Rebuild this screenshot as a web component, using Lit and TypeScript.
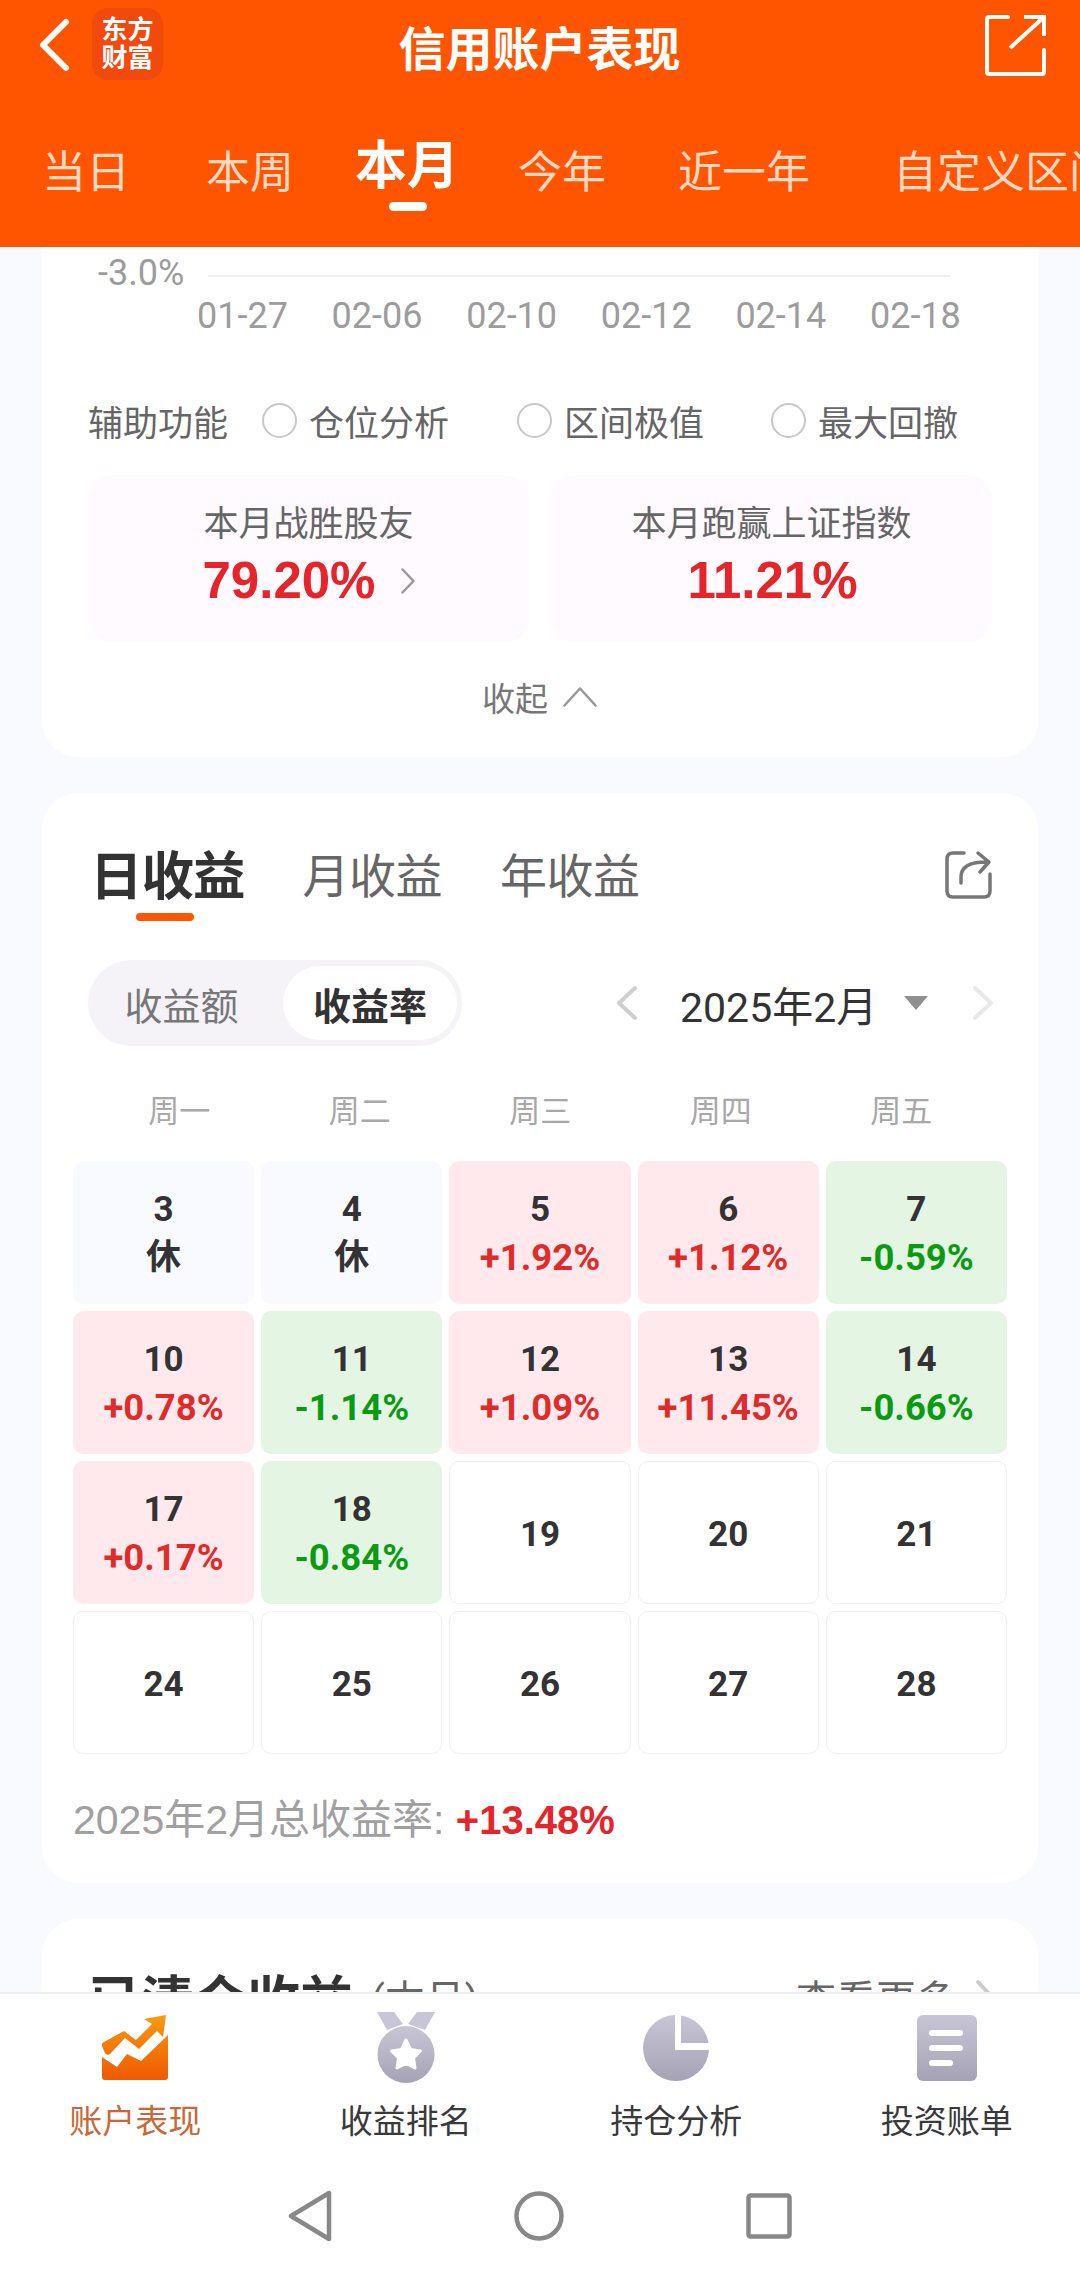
import { LitElement, html, css, svg, unsafeCSS } from "lit";
import { customElement } from "lit/decorators.js";

const FONT = unsafeCSS(`"Roboto", "Noto Sans CJK SC", sans-serif`);
const ARIAL = unsafeCSS(`"Liberation Sans", "Noto Sans CJK SC", sans-serif`);

type Day = { d: number; t?: string; k: "rest" | "up" | "down" | "none" };
const days: Day[] = [
  { d: 3, t: "休", k: "rest" }, { d: 4, t: "休", k: "rest" }, { d: 5, t: "+1.92%", k: "up" }, { d: 6, t: "+1.12%", k: "up" }, { d: 7, t: "-0.59%", k: "down" },
  { d: 10, t: "+0.78%", k: "up" }, { d: 11, t: "-1.14%", k: "down" }, { d: 12, t: "+1.09%", k: "up" }, { d: 13, t: "+11.45%", k: "up" }, { d: 14, t: "-0.66%", k: "down" },
  { d: 17, t: "+0.17%", k: "up" }, { d: 18, t: "-0.84%", k: "down" }, { d: 19, k: "none" }, { d: 20, k: "none" }, { d: 21, k: "none" },
  { d: 24, k: "none" }, { d: 25, k: "none" }, { d: 26, k: "none" }, { d: 27, k: "none" }, { d: 28, k: "none" },
];

@customElement("app-root")
export class AppRoot extends LitElement {
  static styles = css`
    :host { display: block; width: 1080px; height: 2274px; overflow: hidden; background: #f8faff; font-family: ${FONT}; position: relative; }
    * { box-sizing: border-box; }
    .page { display: flex; flex-direction: column; height: 2274px; }
    .top { height: 247px; flex: none; background: #ff5500; color: #fff; position: relative; z-index: 2; }
    .bar { height: 90px; display: flex; align-items: center; padding: 0 34px 0 38px; }
    .bar .back { flex: none; display: block; }
    .logo { flex: none; width: 71px; height: 72px; margin-left: 22px; margin-top: -2px; border-radius: 16px; background: #f24a0c; color: #fff; font-size: 26px; line-height: 28px; font-weight: 700; text-align: center; display: flex; align-items: center; justify-content: center; }
    .title { flex: 1; text-align: center; font-size: 47px; font-weight: 700; padding-right: 68px; white-space: nowrap; }
    .tabs { display: flex; height: 157px; position: relative; overflow: hidden; }
    .tab { position: absolute; top: 58px; font-size: 44px; line-height: 50px; color: #ffd9c4; white-space: nowrap; }
    .tab.on { top: 47px; font-size: 52px; line-height: 60px; font-weight: 700; color: #fff; }
    .tab.on::after { content: ""; position: absolute; left: 34px; top: 65px; width: 38px; height: 9px; border-radius: 5px; background: #fff; }
    .scroll { flex: 1; min-height: 0; overflow: hidden; padding: 0 42px; display: flex; flex-direction: column; gap: 36px; }
    .card { background: #fff; flex: none; }
    .c1 { height: 510px; border-radius: 0 0 36px 36px; padding: 0 46px; display: flex; flex-direction: column; }
    .axis { height: 98px; position: relative; flex: none; }
    .ylab { position: absolute; left: 10px; top: 6px; font-size: 36px; line-height: 40px; color: #9c9c9c; }
    .yline { position: absolute; left: 120px; width: 742px; top: 28px; height: 2px; background: #eceff5; }
    .xlabs { position: absolute; left: 109px; top: 49px; display: flex; }
    .xlabs span { width: 134.6px; font-size: 36px; line-height: 40px; color: #9c9c9c; white-space: nowrap; }
    .assist { display: flex; align-items: center; height: 50px; margin-top: 50px; font-size: 35px; color: #666; white-space: nowrap; flex: none; }
    .assist .lbl { width: 174px; flex: none; }
    .radio { display: flex; align-items: center; gap: 12px; flex: none; }
    .radio i { display: block; width: 35px; height: 35px; border-radius: 50%; border: 2px solid #c8c8c8; }
    .r1 { width: 255px; } .r2 { width: 254px; }
    .stats { display: flex; gap: 22px; margin-top: 30px; width: 906px; flex: none; }
    .stat { flex: none; width: 441px; height: 167px; background: #fefaff; border-radius: 24px; text-align: center; padding-top: 28px; }
    .stat .h { font-size: 35px; line-height: 44px; color: #666; }
    .stat .v { font-family: ${ARIAL}; font-size: 51px; line-height: 62px; font-weight: 700; color: #e5252a; display: flex; justify-content: center; align-items: center; gap: 25px; margin-top: 3px; padding-left: 2px; }
    .fold { display: flex; justify-content: center; align-items: center; gap: 14px; font-size: 33px; color: #777; height: 50px; margin-top: 30px; flex: none; }
    .c2 { height: 1090px; border-radius: 36px; padding: 0 30px; display: flex; flex-direction: column; }
    .htabs { display: flex; align-items: center; height: 168px; padding-left: 18px; flex: none; position: relative; color: #666; font-size: 47px; }
    .htabs .a { font-size: 52.5px; font-weight: 700; color: #333; position: relative; margin-right: 58px; line-height: 70px; letter-spacing: -1px; }
    .htabs .a::after { content: ""; position: absolute; left: 46px; top: 71px; width: 58px; height: 8px; border-radius: 4px; background: #ff5500; }
    .htabs .b { margin-right: 58px; line-height: 70px; letter-spacing: -.5px; }
    .htabs svg { position: absolute; right: 14px; top: 57px; }
    .ctl { display: flex; align-items: center; flex: none; height: 88px; margin-top: -2px; padding-left: 16px; }
    .seg { display: flex; width: 374px; height: 86px; background: #f5f3f7; border-radius: 43px; padding: 6px 5px 6px 6px; font-size: 38px; color: #777; align-items: center; }
    .seg span { flex: 1; text-align: center; white-space: nowrap; padding-right: 14px; }
    .seg b { width: 174px; height: 74px; border-radius: 37px; background: #fff; color: #333; font-weight: 700; display: flex; align-items: center; justify-content: center; flex: none; }
    .month { display: flex; align-items: center; margin-left: auto; font-size: 41px; color: #333; white-space: nowrap; width: 393px; }
    .month svg { display: block; flex: none; }
    .month .txt { margin-left: 41px; width: 200px; margin-top: 1px; }
    .month .tri { margin-left: 24px; width: 0; height: 0; border-left: 12px solid transparent; border-right: 12px solid transparent; border-top: 14px solid #8f8f8f; flex: none; }
    .month .nx { margin-left: 43px; }
    .week { display: grid; grid-template-columns: repeat(5, 180.5px); flex: none; height: 60px; margin-top: 31px; margin-left: 17px; font-size: 31px; color: #a8a8a8; text-align: center; align-items: center; }
    .grid { display: grid; grid-template-columns: repeat(5, 1fr); grid-auto-rows: 143px; gap: 7px; margin-top: 23px; margin-left: 1px; flex: none; width: 934px; }
    .cell { border-radius: 10px; display: flex; flex-direction: column; align-items: center; justify-content: center; font-size: 35px; line-height: 48px; font-weight: 700; color: #333; border: 1px solid transparent; padding-top: 3px; }
    .cell.rest { background: #f8faff; }
    .cell.up { background: #ffe9ed; } .cell.up .t { color: #e02b2b; font-size: 36.5px; }
    .cell.down { background: #e4f5e4; } .cell.down .t { color: #0a9b12; font-size: 36.5px; }
    .cell.none { border-color: #f0f0f2; background: #fff; padding-top: 4px; }
    .total { font-family: ${ARIAL}; font-size: 41px; color: #a0a0a0; margin-top: 41px; padding-left: 1px; height: 50px; line-height: 50px; white-space: nowrap; flex: none; }
    .total b { color: #e5252a; font-weight: 700; font-size: 40px; }
    .c3 { height: 200px; border-radius: 36px 36px 0 0; padding: 43px 42px 0 46px; display: flex; align-items: flex-start; }
    .c3 > div { display: flex; align-items: center; height: 70px; width: 100%; }
    .c3 .t1 { font-size: 53px; font-weight: 700; color: #333; white-space: nowrap; }
    .c3 .t2 { font-size: 40px; color: #666; margin-left: 18px; white-space: nowrap; }
    .c3 .more { margin-left: auto; font-size: 40px; color: #666; margin-right: 18px; white-space: nowrap; }
    .c3 svg { display: block; flex: none; }
    .nav { position: absolute; left: 0; right: 0; top: 1992px; height: 282px; background: #fff; border-top: 2px solid #eeeff2; z-index: 3; display: flex; flex-direction: column; }
    .items { display: grid; grid-template-columns: repeat(4, 270.5px); height: 148px; padding-top: 18px; flex: none; }
    .item { display: flex; flex-direction: column; align-items: center; font-size: 33px; color: #3a3a3a; white-space: nowrap; }
    .ic { height: 71px; display: flex; align-items: center; justify-content: center; flex: none; }
    .ic svg { display: block; }
    .item .lab { margin-top: 20px; line-height: 38px; }
    .item.on { color: #c8693a; }
    .sys { display: flex; align-items: center; justify-content: center; flex: none; height: 52px; margin-top: 48px; gap: 182px; }
    .sys svg { display: block; }
  `;

  private chev(dir: "l" | "r" | "u", color: string, w: number, h: number, sw: number) {
    const p = dir === "l" ? `M${w - sw},${sw} L${sw},${h / 2} L${w - sw},${h - sw}` : dir === "r" ? `M${sw},${sw} L${w - sw},${h / 2} L${sw},${h - sw}` : `M${sw},${h - sw} L${w / 2},${sw} L${w - sw},${h - sw}`;
    return html`<svg width=${w} height=${h} viewBox="0 0 ${w} ${h}"><path d=${p} fill="none" stroke=${color} stroke-width=${sw} stroke-linecap="round" stroke-linejoin="round"/></svg>`;
  }

  private grad(id: string, a: string, b: string) {
    return svg`<defs><linearGradient id=${id} x1="0" y1="0" x2="0" y2="1"><stop offset="0" stop-color=${a}/><stop offset="1" stop-color=${b}/></linearGradient></defs>`;
  }

  render() {
    const tabs: [string, number, boolean][] = [["当日", 42, false], ["本周", 206, false], ["本月", 355, true], ["今年", 518, false], ["近一年", 678, false], ["自定义区间", 893, false]];
    return html`
      <div class="page">
        <div class="top">
          <div class="bar">
            <svg class="back" width="32" height="54" viewBox="0 0 32 54"><path d="M28,4 L5,27 L28,50" fill="none" stroke="#fff" stroke-width="6" stroke-linecap="round" stroke-linejoin="round"/></svg>
            <div class="logo"><div>东方<br />财富</div></div>
            <div class="title">信用账户表现</div>
            <svg width="62" height="62" viewBox="0 0 62 62"><path d="M24,3 H5 Q3,3 3,5 V58 Q3,60 5,60 H58 Q60,60 60,58 V36" fill="none" stroke="#fff" stroke-width="4" stroke-linecap="round" /><path d="M26,34 L60,3 M40,3 H60 V22" fill="none" stroke="#fff" stroke-width="4" /></svg>
          </div>
          <div class="tabs">
            ${tabs.map(([t, x, on]) => html`<div class="tab ${on ? "on" : ""}" style="left:${x}px">${t}</div>`)}
          </div>
        </div>
        <div class="scroll">
          <div class="card c1">
            <div class="axis">
              <div class="ylab">-3.0%</div>
              <div class="yline"></div>
              <div class="xlabs">${["01-27", "02-06", "02-10", "02-12", "02-14", "02-18"].map((x) => html`<span>${x}</span>`)}</div>
            </div>
            <div class="assist">
              <div class="lbl">辅助功能</div>
              <div class="radio r1"><i></i>仓位分析</div>
              <div class="radio r2"><i></i>区间极值</div>
              <div class="radio"><i></i>最大回撤</div>
            </div>
            <div class="stats">
              <div class="stat"><div class="h">本月战胜股友</div><div class="v"><span>79.20%</span>${this.chev("r", "#999", 16, 28, 2.5)}</div></div>
              <div class="stat"><div class="h">本月跑赢上证指数</div><div class="v"><span>11.21%</span></div></div>
            </div>
            <div class="fold">收起 ${this.chev("u", "#999", 36, 22, 2.5)}</div>
          </div>
          <div class="card c2">
            <div class="htabs">
              <span class="a">日收益</span><span class="b">月收益</span><span class="b">年收益</span>
              <svg width="50" height="50" viewBox="0 0 50 50"><path d="M20,3 H9 Q3,3 3,9 V41 Q3,47 9,47 H40 Q46,47 46,41 V24" fill="none" stroke="#777" stroke-width="3.5" stroke-linecap="round"/><path d="M17,33 V27 Q17,12 42,12 M34,3 L45,12 L36,22" fill="none" stroke="#777" stroke-width="3.5" stroke-linecap="round" stroke-linejoin="round"/></svg>
            </div>
            <div class="ctl">
              <div class="seg"><span>收益额</span><b>收益率</b></div>
              <div class="month">
                ${this.chev("l", "#cfcfcf", 24, 38, 4)}
                <span class="txt">2025年2月</span>
                <span class="tri"></span>
                <span class="nx">${this.chev("r", "#ebe8ec", 24, 38, 4)}</span>
              </div>
            </div>
            <div class="week"><span>周一</span><span>周二</span><span>周三</span><span>周四</span><span>周五</span></div>
            <div class="grid">
              ${days.map((d) => html`<div class="cell ${d.k}"><div class="n">${d.d}</div>${d.t ? html`<div class="t">${d.t}</div>` : ""}</div>`)}
            </div>
            <div class="total">2025年2月总收益率: <b>+13.48%</b></div>
          </div>
          <div class="card c3">
            <div>
              <span class="t1">已清仓收益</span><span class="t2">(本月)</span><span class="more">查看更多</span>
              ${this.chev("r", "#ccc", 22, 38, 4)}
            </div>
          </div>
        </div>
        <div class="nav">
          <div class="items">
            <div class="item on">
              <div class="ic"><svg width="66" height="65" viewBox="0 0 66 65">${this.grad("g0", "#f89a12", "#ee5a00")}
                <path d="M0,31 Q-1,28 2,27 L22,16 L34,25 L50,9 L42,4 L64,0 L61,22 L55,16 L37,34 L23,23 L8,39 Q5,41 3,38 Z M0,42 L15,52 L25,39 L39,46 L66,20 V62 Q66,65 63,65 H3 Q0,65 0,62 Z" fill="url(#g0)" />
              </svg></div>
              <div class="lab">账户表现</div>
            </div>
            <div class="item">
              <div class="ic"><svg width="60" height="71" viewBox="0 0 60 71">${this.grad("g1", "#c8c6d6", "#a4a2b4")}
                <path d="M1,0 H18 L27,12 L11,18 Z M59,0 H41 L32,12 L49,18 Z" fill="#c8c6d6" />
                <circle cx="30" cy="42.5" r="28.5" fill="url(#g1)" />
                <path d="M30,28 L34.5,37.5 L44.5,39 L37.5,46 L39,56 L30,51.5 L21,56 L22.5,46 L15.5,39 L25.5,37.5 Z" fill="#fff" stroke="#fff" stroke-width="3" stroke-linejoin="round" />
              </svg></div>
              <div class="lab">收益排名</div>
            </div>
            <div class="item">
              <div class="ic"><svg width="66" height="66" viewBox="0 0 66 66">${this.grad("g2", "#c8c6d6", "#a4a2b4")}
                <path d="M32,0 V35 H66 A33,33 0 1 1 32,0 Z M38,0.5 A33,33 0 0 1 65.6,28 H38 Z" fill="url(#g2)" />
              </svg></div>
              <div class="lab">持仓分析</div>
            </div>
            <div class="item">
              <div class="ic"><svg width="60" height="66" viewBox="0 0 60 66">${this.grad("g3", "#c8c6d6", "#a4a2b4")}
                <rect x="0" y="0" width="60" height="66" rx="6" fill="url(#g3)" />
                <rect x="12" y="15" width="34" height="6" rx="3" fill="#fff" />
                <rect x="12" y="30" width="34" height="6" rx="3" fill="#fff" />
                <rect x="12" y="45" width="24" height="6" rx="3" fill="#fff" />
              </svg></div>
              <div class="lab">投资账单</div>
            </div>
          </div>
          <div class="sys">
            <svg width="44" height="52" viewBox="0 0 44 52"><path d="M41,3 V49 L3,26 Z" fill="none" stroke="#888" stroke-width="4.5" stroke-linejoin="round"/></svg>
            <svg width="50" height="50" viewBox="0 0 50 50"><circle cx="25" cy="25" r="22.5" fill="none" stroke="#888" stroke-width="4.5"/></svg>
            <svg width="46" height="46" viewBox="0 0 46 46"><rect x="2.5" y="2.5" width="41" height="41" rx="2" fill="none" stroke="#888" stroke-width="4.5"/></svg>
          </div>
        </div>
      </div>
    `;
  }
}
